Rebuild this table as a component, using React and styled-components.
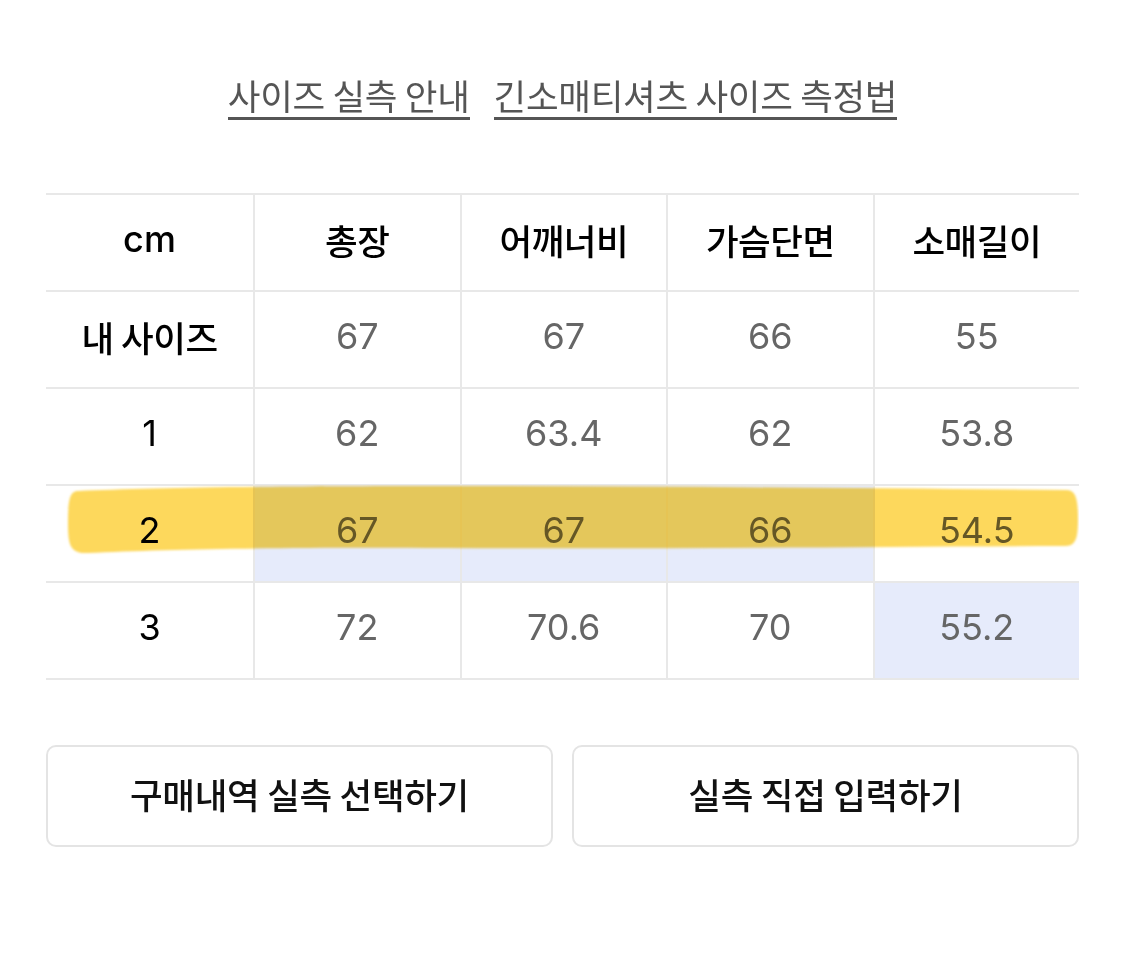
import React from "react";
import styled, { createGlobalStyle } from "styled-components";

const Global = createGlobalStyle`
  html, body { margin: 0; padding: 0; background: #fff; }
  body { font-family: "Noto Sans CJK KR", "Noto Sans", sans-serif; }
`;

const Page = styled.div`
  width: 1125px;
  box-sizing: border-box;
  padding: 75px 46px 0;
`;

const LinkRow = styled.div`
  display: flex;
  justify-content: center;
  gap: 24px;
`;

const GuideLink = styled.a`
  font-family: "Noto Sans CJK KR", sans-serif;
  font-size: 35.5px;
  line-height: 39px;
  color: #555;
  letter-spacing: -0.3px;
  text-decoration: none;
  padding-bottom: 3px;
  border-bottom: 3px solid #555;
  cursor: pointer;
`;

const TableWrap = styled.div`
  position: relative;
  margin-top: 73px;
`;

const Grid = styled.div`
  display: grid;
  grid-template-columns: 207px repeat(4, 1fr);
  grid-auto-rows: 95px;
  gap: 2px;
  padding: 2px 0;
  background: #e8e8e8;
`;

const Cell = styled.div`
  display: flex;
  align-items: center;
  justify-content: center;
  padding-bottom: 7px;
  box-sizing: border-box;
  background: ${(p) => (p.$hl ? "#e6ebfb" : "#fff")};
  color: ${(p) => (p.$dim ? "#666" : "#000")};
  font-family: ${(p) =>
    p.$latin ? 'Inter, "Liberation Sans", sans-serif' : '"Noto Sans CJK KR", sans-serif'};
  font-size: ${(p) => (p.$latin ? "36px" : "35.5px")};
  font-weight: ${(p) => (p.$bold ? 500 : 400)};
  letter-spacing: ${(p) => (p.$latin ? "0" : "-0.5px")};
`;

const Marker = styled.svg`
  position: absolute;
  left: 0;
  top: 292px;
  width: 1033px;
  height: 72px;
  mix-blend-mode: multiply;
  pointer-events: none;
`;

const Buttons = styled.div`
  display: grid;
  grid-template-columns: 1fr 1fr;
  gap: 19px;
  margin-top: 65px;
`;

const Button = styled.button`
  height: 102px;
  padding: 0 0 5px;
  background: #fff;
  border: 2px solid #e4e4e4;
  border-radius: 10px;
  font-family: "Noto Sans CJK KR", sans-serif;
  font-size: 35.5px;
  font-weight: 500;
  color: #111;
  letter-spacing: -0.3px;
  cursor: pointer;
`;

const headers = ["총장", "어깨너비", "가슴단면", "소매길이"];
const rows = [
  { label: "내 사이즈", latin: false, vals: ["67", "67", "66", "55"], hl: [] },
  { label: "1", latin: true, vals: ["62", "63.4", "62", "53.8"], hl: [] },
  { label: "2", latin: true, vals: ["67", "67", "66", "54.5"], hl: [0, 1, 2] },
  { label: "3", latin: true, vals: ["72", "70.6", "70", "55.2"], hl: [3] },
];

export default function App() {
  return (
    <>
      <Global />
      <Page>
        <LinkRow>
          <GuideLink>사이즈 실측 안내</GuideLink>
          <GuideLink>긴소매티셔츠 사이즈 측정법</GuideLink>
        </LinkRow>
        <TableWrap>
          <Grid>
            <Cell $latin $bold>cm</Cell>
            {headers.map((h) => (
              <Cell key={h} $bold>{h}</Cell>
            ))}
            {rows.map((r) => (
              <React.Fragment key={r.label}>
                <Cell $latin={r.latin} $bold={!r.latin}>{r.label}</Cell>
                {r.vals.map((v, i) => (
                  <Cell key={i} $latin $dim $hl={r.hl.includes(i)}>
                    {v}
                  </Cell>
                ))}
              </React.Fragment>
            ))}
          </Grid>
          <Marker viewBox="0 0 1033 72">
            <defs>
              <filter id="soft" x="-2%" y="-20%" width="104%" height="140%">
                <feGaussianBlur stdDeviation="0.8" />
              </filter>
            </defs>
            <path
              filter="url(#soft)"
              fill="#fdd85c"
              d="M 32 6 C 100 3, 200 1, 400 1 C 600 1, 800 3, 1020 5 C 1030 5, 1032 14, 1032 34 C 1032 56, 1029 61, 1018 61 C 800 62, 600 64, 400 63 C 250 62, 120 64, 42 68 C 24 69, 22 60, 22 38 C 22 14, 24 6, 32 6 Z"
            />
          </Marker>
        </TableWrap>
        <Buttons>
          <Button>구매내역 실측 선택하기</Button>
          <Button>실측 직접 입력하기</Button>
        </Buttons>
      </Page>
    </>
  );
}
